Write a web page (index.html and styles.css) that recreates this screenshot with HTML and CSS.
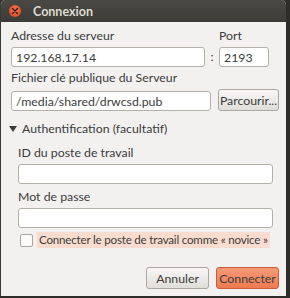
FILE: index.html
```html
<!DOCTYPE html>
<html lang="fr">
<head>
  <meta charset="UTF-8" />
  <title>Connexion</title>
  <link rel="stylesheet" href="styles.css">
</head>
<body>

  <div class="window">
    <div class="titlebar">
      <span class="close-btn">
        <svg width="8" height="8" viewBox="0 0 8 8"><path d="M1.5 1.5 L6.5 6.5 M6.5 1.5 L1.5 6.5" stroke="#3a1a10" stroke-width="1.4" stroke-linecap="round"/></svg>
      </span>
      <span class="title">Connexion</span>
    </div>

    <div class="content">
      <div class="row server-row">
        <div class="field grow">
          <label>Adresse du serveur</label>
          <input type="text" value="192.168.17.14">
        </div>
        <span class="colon">:</span>
        <div class="field port">
          <label>Port</label>
          <input type="text" value="2193">
        </div>
      </div>

      <div class="field">
        <label>Fichier clé publique du Serveur</label>
        <div class="row">
          <input type="text" class="grow" value="/media/shared/drwcsd.pub">
          <button class="btn browse">Parcourir...</button>
        </div>
      </div>

      <div class="expander">
        <span class="arrow"></span>
        <span>Authentification (facultatif)</span>
      </div>

      <div class="auth">
        <div class="field">
          <label>ID du poste de travail</label>
          <input type="text">
        </div>
        <div class="field">
          <label>Mot de passe</label>
          <input type="password">
        </div>
        <div class="check-row">
          <span class="checkbox"></span>
          <span class="check-label">Connecter le poste de travail comme « novice »</span>
        </div>
      </div>

      <div class="actions">
        <button class="btn">Annuler</button>
        <button class="btn primary">Connecter</button>
      </div>
    </div>
  </div>

</body>
</html>
```

FILE: styles.css
```css
body {
  margin: 0;
  background-color: #2e2d2a;
  font-family: 'Lato', 'Open Sans', sans-serif;
  font-size: 12.3px;
  color: #3c3c3c;
}

.window {
  width: 285px;
  height: 296px;
  background-color: #f2f1f0;
  border-left: 1px solid #3a3935;
  border-radius: 5px 5px 0 0;
  overflow: hidden;
  display: flex;
  flex-direction: column;
}

.titlebar {
  height: 22px;
  background: linear-gradient(#4a4944, #3c3b37);
  display: flex;
  align-items: center;
  padding-left: 8px;
  flex-shrink: 0;
}

.close-btn {
  width: 12px;
  height: 12px;
  border-radius: 50%;
  background: radial-gradient(circle at 50% 35%, #f5764a, #d9431e);
  display: flex;
  align-items: center;
  justify-content: center;
}

.title {
  margin-left: 12px;
  color: #dfdbd2;
  font-weight: bold;
  font-size: 12.5px;
}

.content {
  flex: 1;
  padding: 5px 9px 0 10px;
  display: flex;
  flex-direction: column;
}

.row {
  display: flex;
  align-items: flex-end;
}

.grow {
  flex: 1;
  min-width: 0;
}

.field {
  display: flex;
  flex-direction: column;
}

.field label {
  height: 17px;
  line-height: 17px;
  margin-bottom: 3px;
  white-space: nowrap;
}

input {
  height: 20px;
  box-sizing: border-box;
  border: 1px solid #b4b1ab;
  border-radius: 3px;
  background: #fff;
  font-family: inherit;
  font-size: 12.3px;
  color: #3c3c3c;
  padding: 0 4px;
  margin: 0;
  width: 100%;
}

.server-row {
  margin-bottom: 2px;
}

.colon {
  width: 14px;
  text-align: center;
  line-height: 20px;
}

.port {
  width: 50px;
  margin-right: 8px;
}

.btn {
  font-family: inherit;
  font-size: 12.3px;
  color: #3c3c3c;
  height: 22px;
  padding: 0 5px;
  border: 1px solid #aaa7a1;
  border-radius: 3px;
  background: linear-gradient(#f8f7f6, #e0ded9);
  margin-left: 7px;
  white-space: nowrap;
}

.browse {
  width: 61px;
  padding: 0;
  margin-right: -2px;
}

.expander {
  display: flex;
  align-items: center;
  margin-top: 9px;
  height: 17px;
  margin-left: -2px;
}

.arrow {
  width: 0;
  height: 0;
  border-left: 4px solid transparent;
  border-right: 4px solid transparent;
  border-top: 6px solid #3c3c3c;
  margin-right: 5px;
}

.auth {
  padding: 7px 4px 0 7px;
}

.auth .field {
  margin-bottom: 4px;
}

.check-row {
  display: flex;
  align-items: center;
  margin-top: 3px;
}

.checkbox {
  width: 11px;
  height: 11px;
  border: 1px solid #aaa7a1;
  border-radius: 2px;
  background: #fbfbfa;
  margin: 0 4px 0 2px;
  flex-shrink: 0;
}

.check-label {
  background-color: #f8dccf;
  padding: 0 2px;
  line-height: 16px;
  white-space: nowrap;
  font-size: 11.6px;
  letter-spacing: -0.2px;
}

.actions {
  margin-top: auto;
  margin-bottom: 7px;
  display: flex;
  justify-content: flex-end;
  margin-right: -2px;
}

.actions .btn {
  height: 22px;
  padding: 0;
  width: 63px;
}

.btn.primary {
  background: linear-gradient(#f69a77, #ee7a50);
  border-color: #c65e3a;
}
```
